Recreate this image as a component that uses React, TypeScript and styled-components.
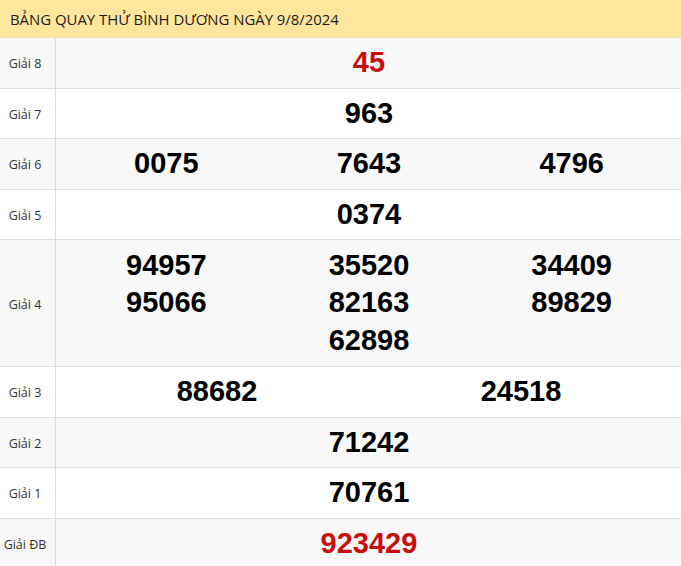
import React from "react";
import styled, { createGlobalStyle } from "styled-components";

const Global = createGlobalStyle`
  html, body { margin: 0; padding: 0; background: #fff; }
  body { font-family: "Open Sans", "Noto Sans", sans-serif; }
`;

const Wrap = styled.div`
  width: 681px;
  overflow: hidden;
`;

const Header = styled.div`
  height: 37px;
  background: #ffe69c;
  border-bottom: 1px solid #f3dba0;
  display: flex;
  align-items: center;
  padding-left: 10px;
  font-size: 14.9px;
  color: #1c1c1c;
`;

const Row = styled.div<{ $alt: boolean }>`
  display: grid;
  grid-template-columns: 56px 1fr;
  background: ${(p) => (p.$alt ? "#f8f8f8" : "#ffffff")};
  border-bottom: 1px solid #dedede;
`;

const Label = styled.div`
  border-right: 1px solid #dedede;
  display: flex;
  align-items: center;
  justify-content: center;
  padding-right: 5px;
  padding-top: 2px;
  font-size: 12.5px;
  color: #333;
  white-space: nowrap;
`;

const Numbers = styled.div<{ $cols: number; $multi: boolean }>`
  display: grid;
  grid-template-columns: repeat(${(p) => p.$cols}, 1fr);
  padding: ${(p) => (p.$multi ? "6.75px" : "6px")} 8px
    ${(p) => (p.$multi ? "6.75px" : "6px")} 9px;
  align-items: start;
`;

const Cell = styled.div`
  display: flex;
  flex-direction: column;
  align-items: center;
`;

const Num = styled.span<{ $red?: boolean }>`
  font-family: "Liberation Sans", Arial, sans-serif;
  font-weight: bold;
  font-size: 29px;
  line-height: 37.5px;
  color: ${(p) => (p.$red ? "#c80d0d" : "#000")};
`;

type Prize = { label: string; cols: string[][]; red?: boolean };

const prizes: Prize[] = [
  { label: "Giải 8", cols: [["45"]], red: true },
  { label: "Giải 7", cols: [["963"]] },
  { label: "Giải 6", cols: [["0075"], ["7643"], ["4796"]] },
  { label: "Giải 5", cols: [["0374"]] },
  {
    label: "Giải 4",
    cols: [
      ["94957", "95066"],
      ["35520", "82163", "62898"],
      ["34409", "89829"],
    ],
  },
  { label: "Giải 3", cols: [["88682"], ["24518"]] },
  { label: "Giải 2", cols: [["71242"]] },
  { label: "Giải 1", cols: [["70761"]] },
  { label: "Giải ĐB", cols: [["923429"]], red: true },
];

export default function App() {
  return (
    <Wrap>
      <Global />
      <Header>BẢNG QUAY THỬ BÌNH DƯƠNG NGÀY 9/8/2024</Header>
      {prizes.map((p, i) => (
        <Row key={p.label} $alt={i % 2 === 0}>
          <Label>{p.label}</Label>
          <Numbers
            $cols={p.cols.length}
            $multi={p.cols.some((c) => c.length > 1)}
          >
            {p.cols.map((c, j) => (
              <Cell key={j}>
                {c.map((n) => (
                  <Num key={n} $red={p.red}>
                    {n}
                  </Num>
                ))}
              </Cell>
            ))}
          </Numbers>
        </Row>
      ))}
    </Wrap>
  );
}
